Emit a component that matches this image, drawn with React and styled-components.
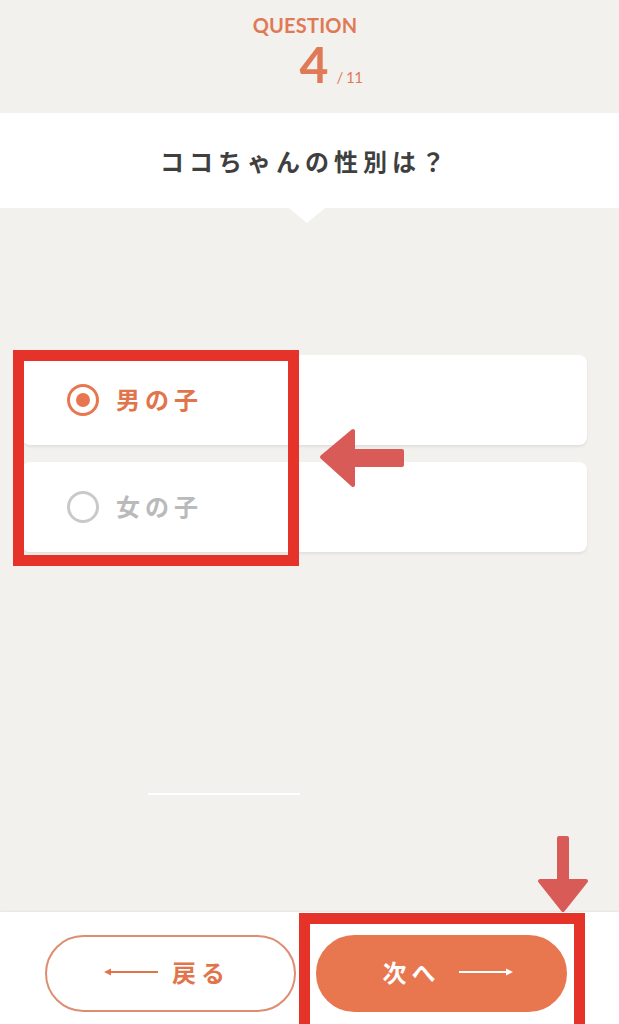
import React from "react";
import styled, { createGlobalStyle } from "styled-components";

const Global = createGlobalStyle`
  html, body { margin: 0; padding: 0; background: #f3f1ee; }
  * { box-sizing: border-box; }
`;

const jp = `"Noto Sans CJK JP", "Noto Sans", sans-serif`;

const Page = styled.div`
  position: relative;
  width: 619px;
  height: 1024px;
  overflow: hidden;
  background: #f3f1ee;
  display: flex;
  flex-direction: column;
  font-family: ${jp};
`;

const Header = styled.header`
  height: 113px;
  display: flex;
  flex-direction: column;
  align-items: center;
  padding-top: 15px;
  color: #e07a56;
  font-family: Lato, "Noto Sans", sans-serif;
`;

const Label = styled.div`
  font-size: 20px;
  line-height: 20px;
  font-weight: 700;
  letter-spacing: 0.2px;
  margin-right: 9px;
`;

const Counter = styled.div`
  position: relative;
  margin-top: 4px;
  margin-left: 9px;
  font-size: 50px;
  line-height: 50px;
  font-weight: 700;
`;

const Total = styled.span`
  position: absolute;
  left: calc(100% + 8px);
  bottom: 4px;
  font-size: 15px;
  line-height: 15px;
  font-weight: 400;
  letter-spacing: -0.5px;
  white-space: nowrap;
`;

const Band = styled.section`
  position: relative;
  height: 95px;
  background: #ffffff;
  display: flex;
  align-items: center;
  justify-content: center;
  z-index: 1;
  &::after {
    content: "";
    position: absolute;
    left: 289px;
    top: 100%;
    border-left: 18px solid transparent;
    border-right: 18px solid transparent;
    border-top: 15px solid #ffffff;
  }
`;

const QuestionText = styled.h1`
  margin: 0 9px 0 0;
  font-size: 24px;
  font-weight: 700;
  letter-spacing: 5px;
  color: #3f3f3f;
`;

const Content = styled.main`
  height: 704px;
  padding: 147px 32px 0 22px;
  display: flex;
  flex-direction: column;
`;

const Options = styled.div`
  display: flex;
  flex-direction: column;
  gap: 17px;
`;

const Card = styled.label`
  height: 90px;
  background: #ffffff;
  border-radius: 8px;
  box-shadow: 0 2px 3px rgba(0, 0, 0, 0.07);
  display: flex;
  align-items: center;
  padding: 0 0 3px 45px;
  gap: 17px;
  cursor: pointer;
`;

const Radio = styled.span`
  width: 32px;
  height: 32px;
  margin-top: 3px;
  border-radius: 50%;
  border: 3px solid ${(p) => (p.$on ? "#e8774f" : "#c9c9c9")};
  display: flex;
  align-items: center;
  justify-content: center;
  &::after {
    content: "";
    width: 14px;
    height: 14px;
    border-radius: 50%;
    background: ${(p) => (p.$on ? "#e8774f" : "transparent")};
  }
`;

const OptionText = styled.span`
  font-size: 24px;
  font-weight: 700;
  letter-spacing: 5px;
  color: ${(p) => (p.$on ? "#e2744c" : "#bababa")};
`;

const Divider = styled.div`
  margin: 241px 0 0 126px;
  width: 152px;
  height: 2px;
  background: #ffffff;
  border-radius: 1px;
`;

const Footer = styled.footer`
  height: 112px;
  background: #ffffff;
  box-shadow: 0 -1px 2px rgba(0, 0, 0, 0.05);
  display: flex;
  gap: 20px;
  padding: 23px 0 0 45px;
`;

const Button = styled.button`
  width: 251px;
  height: 77px;
  border-radius: 39px;
  border: 2px solid ${(p) => (p.$primary ? "#e8774f" : "#dd8d70")};
  background: ${(p) => (p.$primary ? "#e8774f" : "#ffffff")};
  color: ${(p) => (p.$primary ? "#ffffff" : "#e2744c")};
  display: flex;
  align-items: center;
  justify-content: center;
  gap: ${(p) => (p.$primary ? "18px" : "14px")};
  font-family: ${jp};
  font-size: 24px;
  font-weight: 700;
  letter-spacing: 5px;
  padding: ${(p) => (p.$primary ? "0 0 3px 12px" : "0 7px 3px 0")};
  cursor: pointer;
`;

const ButtonLabel = styled.span`
  line-height: 1;
`;

const LongArrow = ({ dir }) => (
  <svg width="54" height="10" viewBox="0 0 54 10" style={{ display: "block" }}>
    {dir === "left" ? (
      <>
        <line x1="4" y1="5" x2="54" y2="5" stroke="currentColor" strokeWidth="2" />
        <polygon points="0,5 7,1.5 7,8.5" fill="currentColor" />
      </>
    ) : (
      <>
        <line x1="0" y1="5" x2="50" y2="5" stroke="currentColor" strokeWidth="2" />
        <polygon points="54,5 47,1.5 47,8.5" fill="currentColor" />
      </>
    )}
  </svg>
);

const Highlight = styled.div`
  position: absolute;
  left: ${(p) => p.$x}px;
  top: ${(p) => p.$y}px;
  width: ${(p) => p.$w}px;
  height: ${(p) => p.$h}px;
  border: 11px solid #e5332a;
  pointer-events: none;
  z-index: 5;
`;

const Pointer = styled.svg`
  position: absolute;
  left: ${(p) => p.$x}px;
  top: ${(p) => p.$y}px;
  pointer-events: none;
  z-index: 6;
`;

const options = [
  { label: "男の子", on: true },
  { label: "女の子", on: false },
];

export default function App() {
  return (
    <>
      <Global />
      <Page>
        <Header>
          <Label>QUESTION</Label>
          <Counter>
            4<Total>/ 11</Total>
          </Counter>
        </Header>
        <Band>
          <QuestionText>ココちゃんの性別は？</QuestionText>
        </Band>
        <Content>
          <Options>
            {options.map((o) => (
              <Card key={o.label}>
                <Radio $on={o.on} />
                <OptionText $on={o.on}>{o.label}</OptionText>
              </Card>
            ))}
          </Options>
          <Divider />
        </Content>
        <Footer>
          <Button>
            <LongArrow dir="left" />
            <ButtonLabel>戻る</ButtonLabel>
          </Button>
          <Button $primary>
            <ButtonLabel>次へ</ButtonLabel>
            <LongArrow dir="right" />
          </Button>
        </Footer>

        <Highlight $x={13} $y={350} $w={286} $h={216} />
        <Highlight $x={299} $y={913} $w={286} $h={124} />

        <Pointer $x={310} $y={420} width="100" height="76" viewBox="0 0 100 76">
          <polygon
            points="12,37 43,11 43,31 92,31 92,45 43,45 43,65"
            fill="#d95b57"
            stroke="#d95b57"
            strokeWidth="4"
            strokeLinejoin="round"
          />
        </Pointer>
        <Pointer $x={530} $y={830} width="66" height="88" viewBox="0 0 66 88">
          <polygon
            points="29,8 37,8 37,51 56,51 33,80 10,51 29,51"
            fill="#d95b57"
            stroke="#d95b57"
            strokeWidth="4"
            strokeLinejoin="round"
          />
        </Pointer>
      </Page>
    </>
  );
}
